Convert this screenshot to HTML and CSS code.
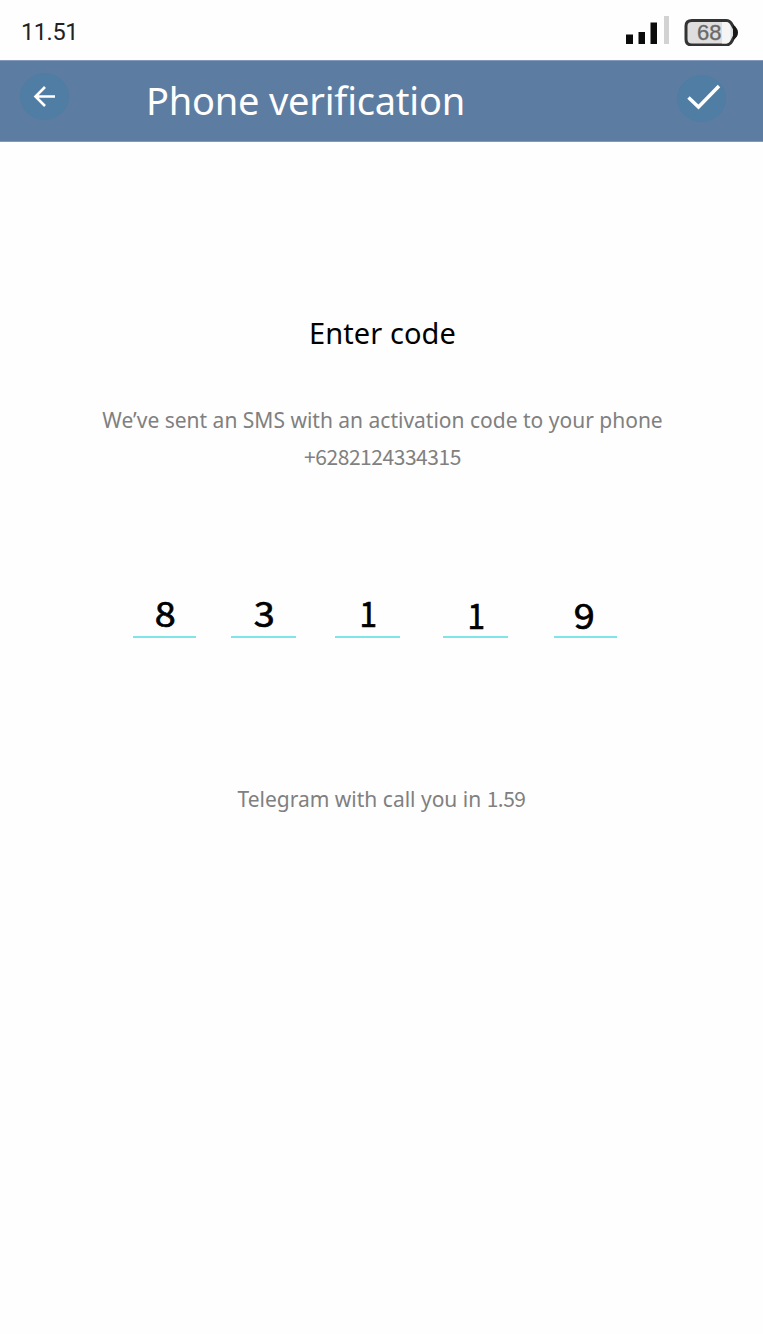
FILE: index.html
```html
<!DOCTYPE html>
<html lang="en">
<head>
<meta charset="utf-8">
<title>Phone verification</title>
<link rel="stylesheet" href="styles.css">
</head>
<body>
<div class="status">
  <span class="time">11.51</span>
  <div class="indicators">
    <svg class="signal" width="46" height="30" viewBox="0 0 46 30">
      <path fill="#0b0b0b" d="M1 19.500h7V29H1zM13.500 17h6.500v12h-6.500zM25.500 7.500h6.500V29h-6.500z"/>
      <path fill="#d2d2d2" d="M39 1h5v28h-5z"/>
    </svg>
    <div class="battery">
      <svg width="54" height="31" viewBox="0 0 54 31">
        <path d="M8 5.500h34q4 0 6 4l2.500 4.500v7L48 26q-2 4-6 4H8q-6 0-6-6V11q0-5.500 6-5.500z" fill="#dedede" stroke="#333" stroke-width="3"/>
        <path d="M38 7h4q3 0 4.500 4v13q-1.500 4.500-4.500 4.500h-4z" fill="#f5f5f5"/>
        <path d="M49 10q5 3 5 7.500T49 25z" fill="#171717"/>
      </svg>
      <span class="level">68</span>
    </div>
  </div>
</div>
<header class="bar">
  <button class="round back" aria-label="Back">
    <svg width="48" height="48" viewBox="0 0 48 48" fill="none" stroke="#fff" stroke-width="2.600"><path d="M35 24.500H15.500M25 15l-9.500 9.500 9.500 9.500"/></svg>
  </button>
  <h1 class="title">Phone verification</h1>
  <button class="round done" aria-label="Done">
    <svg width="48" height="48" viewBox="0 0 48 48" fill="none" stroke="#fff" stroke-width="3.500"><path d="M11.500 23.500l10 9.500L42 12"/></svg>
  </button>
</header>
<main class="content">
  <h2 class="heading">Enter code</h2>
  <p class="note">We’ve sent an SMS with an activation code to your phone</p>
  <p class="phone">+6282124334315</p>
  <div class="code">
    <div class="cell"><span>8</span></div>
    <div class="cell wide"><span>3</span></div>
    <div class="cell wide one"><span>1</span></div>
    <div class="cell wide one low"><span>1</span></div>
    <div class="cell low"><span>9</span></div>
  </div>
  <p class="note timer">Telegram with call you in <span class="count">1.59</span></p>
</main>
</body>
</html>
```
FILE: styles.css
```css
* { box-sizing: border-box; }
body { margin: 0; min-height: 1334px; background: #fefefe; font-family: "Noto Sans", sans-serif; color: #000; }
h1, h2, p { margin: 0; font-weight: 400; }
.status { height: 60px; display: flex; justify-content: space-between; padding: 0 25px 0 21px; }
.time { font: 23.500px/64px Roboto, sans-serif; letter-spacing: -.4px; color: #222; }
.indicators { display: flex; gap: 13px; padding-top: 15px; }
.signal { display: block; }
.battery { display: grid; width: 54px; height: 31px; }
.battery > * { grid-area: 1 / 1; }
.level { font: 22px/36px "Liberation Sans", sans-serif; color: #666; -webkit-text-stroke: .4px #777; padding-left: 13px; }
.bar { height: 82px; display: flex; align-items: flex-start; background: #5d7ca2; padding: 12px 37px 0 20px; border-top: 1px solid #829ab8; border-bottom: 1px solid #829ab8; }
.round { flex: none; width: 49px; height: 47px; border: 0; padding: 0; border-radius: 50%; background: #4f7da4; }
.round svg { display: block; margin-top: -1px; }
.done { margin-top: 2px; }
.title { flex: 1; padding-left: 77px; font-size: 38px; letter-spacing: -.22px; line-height: 54px; color: #fff; font-variant-ligatures: common-ligatures; }
.content { display: flex; flex-direction: column; align-items: center; padding: 171px 0 0 2px; }
.heading { font-size: 29px; line-height: 40px; letter-spacing: .1px; }
.note { font-size: 21px; line-height: 30px; color: #808080; margin-top: 52px; white-space: nowrap; }
.phone { font: 21px/30px "Noto Sans CJK JP", sans-serif; letter-spacing: -.45px; color: #808080; margin-top: 6px; }
.code { align-self: flex-start; display: flex; height: 44px; margin: 123px 0 0 131px; }
.cell { width: 63px; border-bottom: 2px solid #80e5e8; text-align: center; font: 400 35px/34px "Noto Sans CJK JP", sans-serif; -webkit-text-stroke: .7px #000; }
.cell span { display: inline-block; transform: translate(.5px, .5px) scaleX(1.08); }
.wide { width: 65px; }
.one span { transform: translate(.5px, .5px) scaleX(.9); }
.low { padding-top: 2px; }
.cell:nth-child(2) { margin-left: 35px; }
.cell:nth-child(3) { margin-left: 39px; }
.cell:nth-child(4) { margin-left: 43px; }
.cell:nth-child(5) { margin-left: 46px; padding-right: 3px; }
.timer { margin-top: 146px; padding-right: 2px; }
.count { font-family: "Noto Sans CJK JP", sans-serif; line-height: 1; letter-spacing: -.5px; }
```
